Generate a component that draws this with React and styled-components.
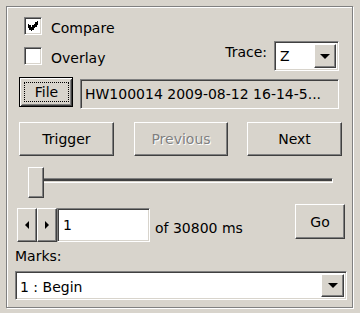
import React from "react";
import styled, { createGlobalStyle, css } from "styled-components";

const FACE = "#d8d4cc";

const GlobalStyle = createGlobalStyle`
  html, body {
    margin: 0;
    padding: 0;
    background: ${FACE};
  }
  body {
    width: 360px;
    height: 313px;
    overflow: hidden;
    font-family: "DejaVu Sans", Tahoma, sans-serif;
    font-size: 14px;
    color: #000;
  }
`;

const raised = css`
  border: 1px solid;
  border-color: #fff #404040 #404040 #fff;
  box-shadow: inset -1px -1px 0 #808080, inset 1px 1px 0 ${FACE};
`;

const sunken = css`
  border: 1px solid;
  border-color: #808080 #fff #fff #808080;
  box-shadow: inset 1px 1px 0 #404040, inset -1px -1px 0 ${FACE};
`;

const Page = styled.div`
  padding: 6px 0 0 6px;
`;

const GroupBox = styled.div`
  box-sizing: border-box;
  width: 347px;
  height: 302px;
  border: 1px solid #808080;
  box-shadow: inset 1px 1px 0 #fff, 1px 1px 0 #fff;
  display: flex;
  flex-direction: column;
`;

const Row = styled.div`
  display: flex;
  align-items: ${p => p.$align || "flex-start"};
  height: ${p => p.$h}px;
  margin-top: ${p => p.$top}px;
  padding-left: ${p => p.$left || 0}px;
  padding-right: ${p => p.$right || 0}px;
  gap: ${p => p.$gap || 0}px;
  flex-shrink: 0;
`;

const Text = styled.span`
  line-height: 16px;
  white-space: nowrap;
  margin-top: ${p => p.$top || 0}px;
`;

const CheckLabel = styled.label`
  display: flex;
  align-items: flex-start;
  gap: 9px;
  margin-top: ${p => p.$top || 0}px;
`;

const CheckBox = styled.span`
  box-sizing: border-box;
  width: 18px;
  height: 18px;
  background: #fff;
  ${sunken};
  display: flex;
  align-items: center;
  justify-content: center;
`;

const Button = styled.button`
  box-sizing: border-box;
  width: ${p => p.$w}px;
  height: ${p => p.$h}px;
  margin: 0;
  padding: 0;
  background: ${FACE};
  font: inherit;
  color: #000;
  ${raised};
  display: flex;
  align-items: center;
  justify-content: center;
  &:disabled {
    color: #808080;
    text-shadow: 1px 1px 0 #fff;
  }
`;

const DefaultButton = styled(Button)`
  border: 1px solid #000;
  box-shadow: inset 1px 1px 0 #fff, inset -1px -1px 0 #404040,
    inset 2px 2px 0 ${FACE}, inset -2px -2px 0 #808080;
  padding: 4px 3px 4px 4px;
`;

const FocusRect = styled.span`
  box-sizing: border-box;
  flex: 1;
  align-self: stretch;
  border: 1px dotted #000;
  display: flex;
  align-items: center;
  justify-content: center;
`;

const Field = styled.div`
  box-sizing: border-box;
  width: ${p => p.$w}px;
  height: ${p => p.$h}px;
  margin-top: ${p => p.$top || 0}px;
  background: ${p => (p.$readOnly ? FACE : "#fff")};
  ${sunken};
  display: flex;
  align-items: center;
  padding-left: ${p => p.$pad || 5}px;
  overflow: hidden;
  white-space: nowrap;
`;

const Combo = styled.div`
  box-sizing: border-box;
  width: ${p => p.$w}px;
  height: ${p => p.$h}px;
  background: #fff;
  ${sunken};
  padding: 2px;
  display: flex;
`;

const ComboValue = styled.span`
  flex: 1;
  display: flex;
  align-items: center;
  padding-left: ${p => p.$pad || 3}px;
  padding-top: ${p => p.$padTop || 0}px;
  white-space: nowrap;
`;

const DropButton = styled.span`
  box-sizing: border-box;
  width: ${p => p.$w}px;
  background: ${FACE};
  ${raised};
  display: flex;
  align-items: center;
  justify-content: center;
`;

const SpinGroup = styled.div`
  display: flex;
  margin-top: 4px;
`;

const SpinButton = styled(Button)`
  width: 20px;
  height: 34px;
`;

const Slider = styled.div`
  position: relative;
  width: 305px;
  height: 31px;
`;

const Track = styled.div`
  box-sizing: border-box;
  margin-top: 11px;
  height: 5px;
  border: 1px solid;
  border-color: #808080 #fff #fff #808080;
  box-shadow: inset 0 1px 0 #404040, inset 0 2px 0 #404040;
`;

const Thumb = styled.div`
  position: absolute;
  top: 0;
  box-sizing: border-box;
  width: 16px;
  height: 31px;
  background: ${FACE};
  ${raised};
`;

const CheckMark = () => (
  <svg width="10" height="10" viewBox="0 0 7 7" shapeRendering="crispEdges">
    <polygon
      fill="#000"
      points="0,2 1,2 1,3 2,3 2,4 3,4 3,3 4,3 4,2 5,2 5,1 6,1 6,0 7,0 7,3 6,3 6,4 5,4 5,5 4,5 4,6 3,6 3,7 2,7 2,6 1,6 1,5 0,5"
    />
  </svg>
);

const DownArrow = () => (
  <svg width="10" height="5" viewBox="0 0 10 5">
    <polygon fill="#000" points="0,0 10,0 5,5" />
  </svg>
);

const SideArrow = ({ dir }) => (
  <svg width="4" height="8" viewBox="0 0 4 8">
    <polygon fill="#000" points={dir === "left" ? "4,0 4,8 0,4" : "0,0 0,8 4,4"} />
  </svg>
);

const Checkbox = ({ checked, label, top }) => (
  <CheckLabel $top={top}>
    <CheckBox>{checked && <CheckMark />}</CheckBox>
    <Text $top={3}>{label}</Text>
  </CheckLabel>
);

const position = 0;
const total = 30800;

export default function App() {
  return (
    <Page>
      <GlobalStyle />
      <GroupBox>
        <Row $top={10} $h={18} $left={17}>
          <Checkbox checked label="Compare" />
        </Row>

        <Row $top={6} $h={30} $left={17} $right={13}>
          <Checkbox label="Overlay" top={6} />
          <Text $top={3} style={{ marginLeft: "auto", marginRight: 7 }}>
            Trace:
          </Text>
          <Combo $w={65} $h={30}>
            <ComboValue $pad={3}>Z</ComboValue>
            <DropButton $w={22}>
              <DownArrow />
            </DropButton>
          </Combo>
        </Row>

        <Row $top={6} $h={32} $left={12} $gap={7}>
          <DefaultButton $w={54} $h={30}>
            <FocusRect>File</FocusRect>
          </DefaultButton>
          <Field $w={259} $h={30} $top={2} $readOnly $pad={4}>
            HW100014 2009-08-12 16-14-5...
          </Field>
        </Row>

        <Row $top={13} $h={34} $left={12}>
          <Button $w={95} $h={34}>Trigger</Button>
          <Button $w={94} $h={34} disabled style={{ marginLeft: 20 }}>
            Previous
          </Button>
          <Button $w={95} $h={34} style={{ marginLeft: 19 }}>
            Next
          </Button>
        </Row>

        <Row $top={11} $h={31} $left={21}>
          <Slider>
            <Track />
            <Thumb style={{ left: (position / total) * 289 }} />
          </Slider>
        </Row>

        <Row $top={6} $h={38} $left={10} $right={7}>
          <SpinGroup>
            <SpinButton>
              <SideArrow dir="left" />
            </SpinButton>
            <SpinButton>
              <SideArrow dir="right" />
            </SpinButton>
            <Field $w={93} $h={34}>1</Field>
          </SpinGroup>
          <Text $top={16} style={{ marginLeft: 5 }}>
            of {total} ms
          </Text>
          <Button $w={50} $h={35} style={{ marginLeft: "auto" }}>
            Go
          </Button>
        </Row>

        <Row $top={6} $h={16} $left={8}>
          <Text>Marks:</Text>
        </Row>

        <Row $top={7} $h={29} $left={8}>
          <Combo $w={332} $h={29}>
            <ComboValue $pad={2} $padTop={2}>1 : Begin</ComboValue>
            <DropButton $w={23}>
              <DownArrow />
            </DropButton>
          </Combo>
        </Row>
      </GroupBox>
    </Page>
  );
}
